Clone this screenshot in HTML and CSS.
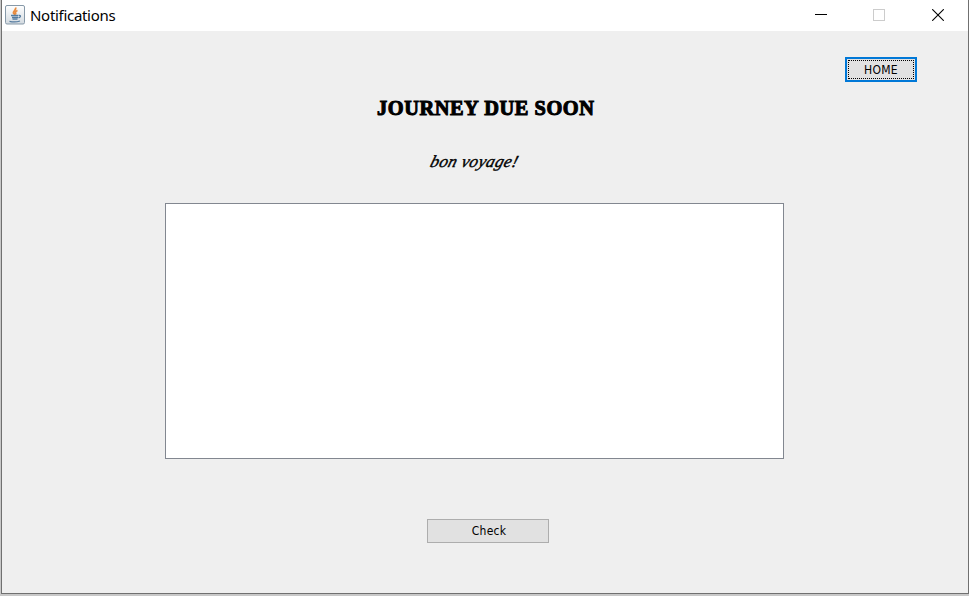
FILE: index.html
```html
<!DOCTYPE html>
<html lang="en">
<head>
<meta charset="utf-8">
<title>Notifications</title>
<link rel="stylesheet" href="styles.css">
</head>
<body>
<div class="window">
  <header class="titlebar">
    <svg class="app-icon" width="20" height="20" viewBox="0 0 20 20" fill="none">
      <defs><linearGradient id="tile" x1="0" y1="0" x2="0" y2="1"><stop stop-color="#fff"/><stop offset="1" stop-color="#d3dae0"/></linearGradient></defs>
      <rect x=".5" y=".5" width="19" height="18.5" rx="1.5" fill="url(#tile)" stroke="#8799a8"/>
      <path d="M10.5 2.5C12 5 7.5 6 8.500 8.200L10 9.500M12.500 5.500C10 6.500 10 7.500 11 9.500" stroke="#e88b3e" stroke-width="1.800"/>
      <path d="M6 10.500H13M7 12.500H13M7.500 14.200H12.500M4.500 16.300Q10 17.600 15 16M13.500 10.500Q16.500 10 15 12L13.500 13" stroke="#547b9f" stroke-width="1.300"/>
    </svg>
    <span class="caption">Notifications</span>
    <div class="controls">
      <svg width="12" height="12" viewBox="0 0 12 12"><path d="M0 5.500H12" stroke="#000"/></svg>
      <svg width="12" height="12" viewBox="0 0 12 12"><rect x=".5" y=".5" width="11" height="11" fill="none" stroke="#ccc"/></svg>
      <svg class="close" width="12" height="12" viewBox="0 0 12 12"><path d="M.2 .2L11.800 11.800M11.800 .2L.2 11.800" stroke="#000" stroke-width="1.100"/></svg>
    </div>
  </header>
  <main class="content">
    <button class="home"><span>HOME</span></button>
    <h1 class="heading">JOURNEY DUE SOON</h1>
    <p class="greeting">bon voyage!</p>
    <div class="list"></div>
    <button class="check">Check</button>
  </main>
</div>
</body>
</html>
```
FILE: styles.css
```css
* { box-sizing: border-box; }
body { margin: 0; height: 596px; overflow: hidden; background: #c8c8c8; }
.window {
  width: 968px;
  height: 594px;
  margin-left: 1px;
  border: solid #707070;
  border-width: 0 1px 1px;
  background: #efefef;
}
.titlebar {
  display: flex;
  height: 31px;
  padding-left: 3px;
  background: #fff;
}
.app-icon { margin-top: 5px; }
.caption {
  margin-left: 5px;
  font: 15px/31px "Noto Sans", sans-serif;
  letter-spacing: -0.3px;
  color: #000;
}
.controls {
  display: flex;
  gap: 46px;
  margin: 9px 24px 0 auto;
}
.close { margin-left: 1px; }
.content {
  display: flex;
  flex-direction: column;
  align-items: flex-start;
  height: 562px;
  color: #000;
}
button {
  padding: 0;
  border-radius: 0;
  background: #e1e1e1;
  color: #000;
  font: 12px/14px "DejaVu Sans Condensed", "DejaVu Sans", sans-serif;
  letter-spacing: 0.3px;
}
.home {
  width: 72px;
  height: 25px;
  margin: 26px 0 0 843px;
  padding: 1px;
  border: 2px solid #0078d7;
}
.home span {
  display: block;
  height: 19px;
  border: 1px dotted #000;
  line-height: 18px;
}
.heading {
  height: 26px;
  margin: 13px 0 0 375px;
  font: bold 22px/26px "Liberation Serif", serif;
  letter-spacing: 0.6px;
  white-space: nowrap;
  transform: scaleX(0.926);
  transform-origin: left;
  -webkit-text-stroke: 1.1px #000;
}
.greeting {
  height: 26px;
  margin: 27px 0 0 429px;
  font: italic 17px/28px "Liberation Serif", serif;
  letter-spacing: 0.35px;
  white-space: nowrap;
  transform: skewX(-16deg);
  -webkit-text-stroke: 0.4px #000;
}
.list {
  width: 619px;
  height: 256px;
  margin: 29px 0 0 163px;
  border: 1px solid #828790;
  background: #fff;
}
.check {
  width: 122px;
  height: 24px;
  margin: 60px 0 0 425px;
  padding-left: 2px;
  border: 1px solid #adadad;
}
```
